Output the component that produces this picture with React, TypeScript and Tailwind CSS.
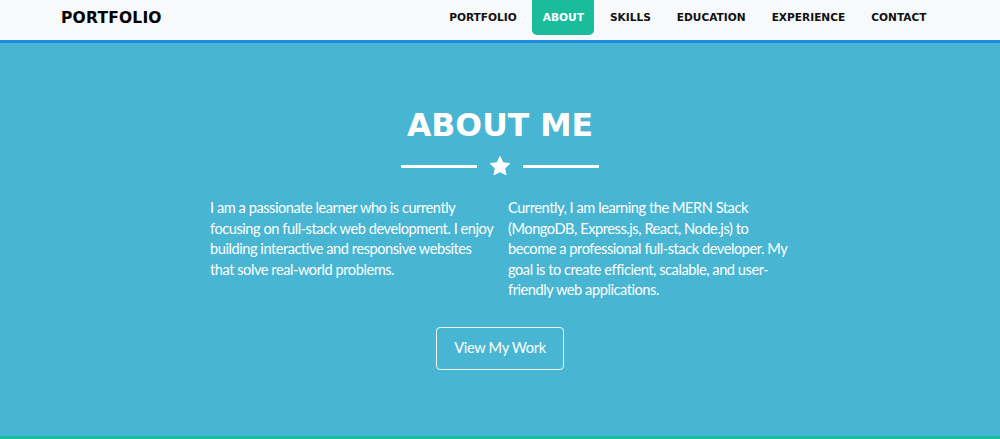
const navItems = ['PORTFOLIO', 'ABOUT', 'SKILLS', 'EDUCATION', 'EXPERIENCE', 'CONTACT']

const heading = { fontFamily: '"DejaVu Sans", "Open Sans", sans-serif' }

const Star = () => (
  <svg width="22" height="22" viewBox="0 0 24 24" fill="white">
    <path d="M12 1.8l3.1 6.6 7.2.9-5.3 5 1.4 7.1L12 17.9l-6.4 3.5 1.4-7.1-5.3-5 7.2-.9z" strokeLinejoin="round" stroke="white" strokeWidth="1.2" />
  </svg>
)

const App = () => {
  return (
    <div className="w-[1000px] h-[439px] overflow-hidden bg-[#48b6d2]" style={{ fontFamily: 'Lato, sans-serif' }}>
      <nav className="h-[43px] bg-[#f8f9fa] border-b-[3px] border-[#1b8ce0]">
        <div className="mx-[61px] flex items-start justify-between">
          <span className="mt-[7px] text-[15.5px] font-bold text-black tracking-[0.2px]" style={heading}>PORTFOLIO</span>
          <ul className="flex gap-[5px] mr-[2px]">
            {navItems.map((item) => (
              <li
                key={item}
                className={
                  'h-[35px] flex items-center px-[10.5px] text-[10.6px] font-bold rounded-b-[5px] ' +
                  (item === 'ABOUT' ? 'bg-[#1abc9c] text-white' : 'text-[#111]')
                }
                style={heading}
              >
                {item}
              </li>
            ))}
          </ul>
        </div>
      </nav>

      <section className="h-[393px] flex flex-col items-center pt-[62px]">
        <h2 className="text-[31.5px] font-bold text-white leading-[40px]" style={heading}>ABOUT ME</h2>
        <div className="mt-[10px] flex items-center gap-[12px]">
          <div className="w-[76px] h-[3px] bg-white" />
          <Star />
          <div className="w-[76px] h-[3px] bg-white" />
        </div>
        <div className="mt-[21px] w-[580px] flex gap-[13px] text-white text-[14.6px] tracking-[-0.45px] leading-[20.5px]">
          <p className="w-[285px]">
            I am a passionate learner who is currently focusing on full-stack web development. I enjoy building interactive and responsive websites that solve real-world problems.
          </p>
          <p className="w-[282px]">
            Currently, I am learning the MERN Stack (MongoDB, Express.js, React, Node.js) to become a professional full-stack developer. My goal is to create efficient, scalable, and user-friendly web applications.
          </p>
        </div>
        <button className="mt-[26px] w-[128px] h-[43px] border-[1.5px] border-white/90 rounded-[4px] text-white text-[14.6px] tracking-[-0.3px]">
          View My Work
        </button>
      </section>
      <div className="h-[3px] bg-[#1abc9c]" />
    </div>
  )
}

export default App
